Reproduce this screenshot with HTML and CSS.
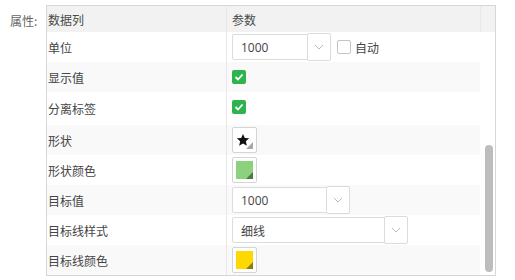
FILE: index.html
```html
<!DOCTYPE html>
<html lang="zh-CN">
<head>
    <meta charset="UTF-8">
    <title>属性</title>
    <link rel="stylesheet" href="styles.css">
</head>
<body>

    <div class="field">
        <div class="field-label">属性:</div>

        <div class="prop-grid">
            <div class="grid-head">
                <div class="cell name">数据列</div>
                <div class="cell value">参数</div>
                <div class="head-gutter"></div>
            </div>

            <div class="grid-body">
                <div class="rows">
                    <div class="row">
                        <div class="cell name">单位</div>
                        <div class="cell value">
                            <div class="combo combo-short">
                                <span class="combo-text">1000</span>
                                <span class="combo-btn"><svg width="10" height="6" viewBox="0 0 10 6"><path d="M1 1l4 4 4-4" fill="none" stroke="#bbb" stroke-width="1"/></svg></span>
                            </div>
                            <label class="check-plain"><span class="box"></span>自动</label>
                        </div>
                    </div>

                    <div class="row alt">
                        <div class="cell name">显示值</div>
                        <div class="cell value"><span class="check-on"><svg width="10" height="8" viewBox="0 0 10 8"><path d="M1.5 4l2.5 2.5 4.5-5" fill="none" stroke="#fff" stroke-width="1.8"/></svg></span></div>
                    </div>

                    <div class="row tall">
                        <div class="cell name">分离标签</div>
                        <div class="cell value"><span class="check-on"><svg width="10" height="8" viewBox="0 0 10 8"><path d="M1.5 4l2.5 2.5 4.5-5" fill="none" stroke="#fff" stroke-width="1.8"/></svg></span></div>
                    </div>

                    <div class="row alt">
                        <div class="cell name">形状</div>
                        <div class="cell value">
                            <span class="swatch shape">
                                <svg width="14" height="14" viewBox="0 0 24 24"><path d="M12 1.5l3.1 7 7.4.7-5.6 5 1.7 7.5L12 17.8l-6.6 3.9 1.7-7.5-5.6-5 7.4-.7z" fill="#111"/></svg>
                                <span class="corner grey"></span>
                            </span>
                        </div>
                    </div>

                    <div class="row">
                        <div class="cell name">形状颜色</div>
                        <div class="cell value">
                            <span class="swatch"><span class="fill green"></span><span class="corner dark-green"></span></span>
                        </div>
                    </div>

                    <div class="row alt">
                        <div class="cell name">目标值</div>
                        <div class="cell value">
                            <div class="combo combo-mid">
                                <span class="combo-text">1000</span>
                                <span class="combo-btn"><svg width="10" height="6" viewBox="0 0 10 6"><path d="M1 1l4 4 4-4" fill="none" stroke="#bbb" stroke-width="1"/></svg></span>
                            </div>
                        </div>
                    </div>

                    <div class="row">
                        <div class="cell name">目标线样式</div>
                        <div class="cell value">
                            <div class="combo combo-long">
                                <span class="combo-text">细线</span>
                                <span class="combo-btn"><svg width="10" height="6" viewBox="0 0 10 6"><path d="M1 1l4 4 4-4" fill="none" stroke="#bbb" stroke-width="1"/></svg></span>
                            </div>
                        </div>
                    </div>

                    <div class="row alt">
                        <div class="cell name">目标线颜色</div>
                        <div class="cell value">
                            <span class="swatch"><span class="fill yellow"></span><span class="corner olive"></span></span>
                        </div>
                    </div>
                </div>

                <div class="scroll-track">
                    <div class="scroll-thumb"></div>
                </div>
            </div>
        </div>
    </div>

</body>
</html>
```

FILE: styles.css
```css
body {
    margin: 0;
    font-family: "Noto Sans CJK SC", "Open Sans", sans-serif;
    font-size: 12px;
    color: #444;
    background-color: #fff;
}

.field {
    display: flex;
    padding: 5px 0 0 10px;
}

.field-label {
    width: 36px;
    padding-top: 7px;
    color: #666;
}

.prop-grid {
    width: 448px;
    border: 1px solid #d6d6d6;
}

.grid-head {
    display: flex;
    height: 26px;
    background-color: #f2f2f2;
}

.grid-head .cell {
    color: #4a4a4a;
}

.grid-head .name {
    padding-left: 5px;
}

.head-gutter {
    width: 14px;
    border-left: 1px solid #e8e8e8;
}

.cell {
    display: flex;
    align-items: center;
}

.cell.name {
    box-sizing: border-box;
    width: 180px;
    padding-left: 1px;
    border-right: 1px solid #e8e8e8;
}

.cell.value {
    flex: 1;
    padding-left: 5px;
    gap: 6px;
}

.grid-body {
    display: flex;
    height: 243px;
}

.rows {
    flex: 1;
}

.row {
    display: flex;
    height: 30px;
}

.row.tall {
    height: 33px;
}

.row.tall .value {
    padding-bottom: 4px;
    box-sizing: border-box;
}

.row.alt {
    background-color: #f9f9f9;
}

.scroll-track {
    width: 15px;
    display: flex;
    flex-direction: column;
    justify-content: flex-end;
    align-items: center;
    padding-bottom: 3px;
}

.scroll-thumb {
    width: 8px;
    height: 127px;
    margin-left: 2px;
    border-radius: 4px;
    background-color: #bdbdbd;
}

.combo {
    display: flex;
    box-sizing: border-box;
    height: 26px;
    border: 1px solid #dcdcdc;
    border-radius: 2px;
    background-color: #fff;
}

.combo-short {
    width: 99px;
}

.combo-mid {
    width: 118px;
}

.combo-long {
    width: 176px;
}

.combo-text {
    flex: 1;
    display: flex;
    align-items: center;
    padding-left: 8px;
    font-family: "Open Sans", "Noto Sans CJK SC", sans-serif;
    font-size: 12px;
    color: #444;
}

.combo-long .combo-text {
    font-family: "Noto Sans CJK SC", sans-serif;
}

.combo-btn {
    display: flex;
    align-items: center;
    justify-content: center;
    width: 22px;
    margin: -2px -1px -2px 0;
    border: 1px solid #dcdcdc;
    border-radius: 2px;
    background-color: #fff;
}

.check-plain {
    display: flex;
    align-items: center;
    gap: 4px;
    color: #444;
}

.check-plain .box {
    box-sizing: border-box;
    width: 14px;
    height: 14px;
    border: 1px solid #c4c4c4;
    border-radius: 2px;
    background-color: #fff;
}

.check-on {
    display: flex;
    align-items: center;
    justify-content: center;
    width: 14px;
    height: 14px;
    border-radius: 2px;
    background-color: #2eb34f;
}

.swatch {
    position: relative;
    display: flex;
    align-items: center;
    justify-content: center;
    box-sizing: border-box;
    width: 25px;
    height: 26px;
    padding: 3px;
    border: 1px solid #d4d4d4;
    border-radius: 2px;
    background-color: #fff;
}

.swatch.shape {
    justify-content: flex-start;
    padding-left: 3px;
}

.fill {
    width: 100%;
    height: 100%;
}

.fill.green {
    background-color: #8cd27e;
}

.fill.yellow {
    background-color: #ffd800;
}

.corner {
    position: absolute;
    right: 3px;
    bottom: 3px;
    width: 0;
    height: 0;
    border-left: 7px solid transparent;
}

.corner.grey {
    border-bottom: 7px solid #a8a8a8;
}

.corner.dark-green {
    border-bottom: 7px solid #4c7a44;
}

.corner.olive {
    border-bottom: 7px solid #8c7a12;
}
```
